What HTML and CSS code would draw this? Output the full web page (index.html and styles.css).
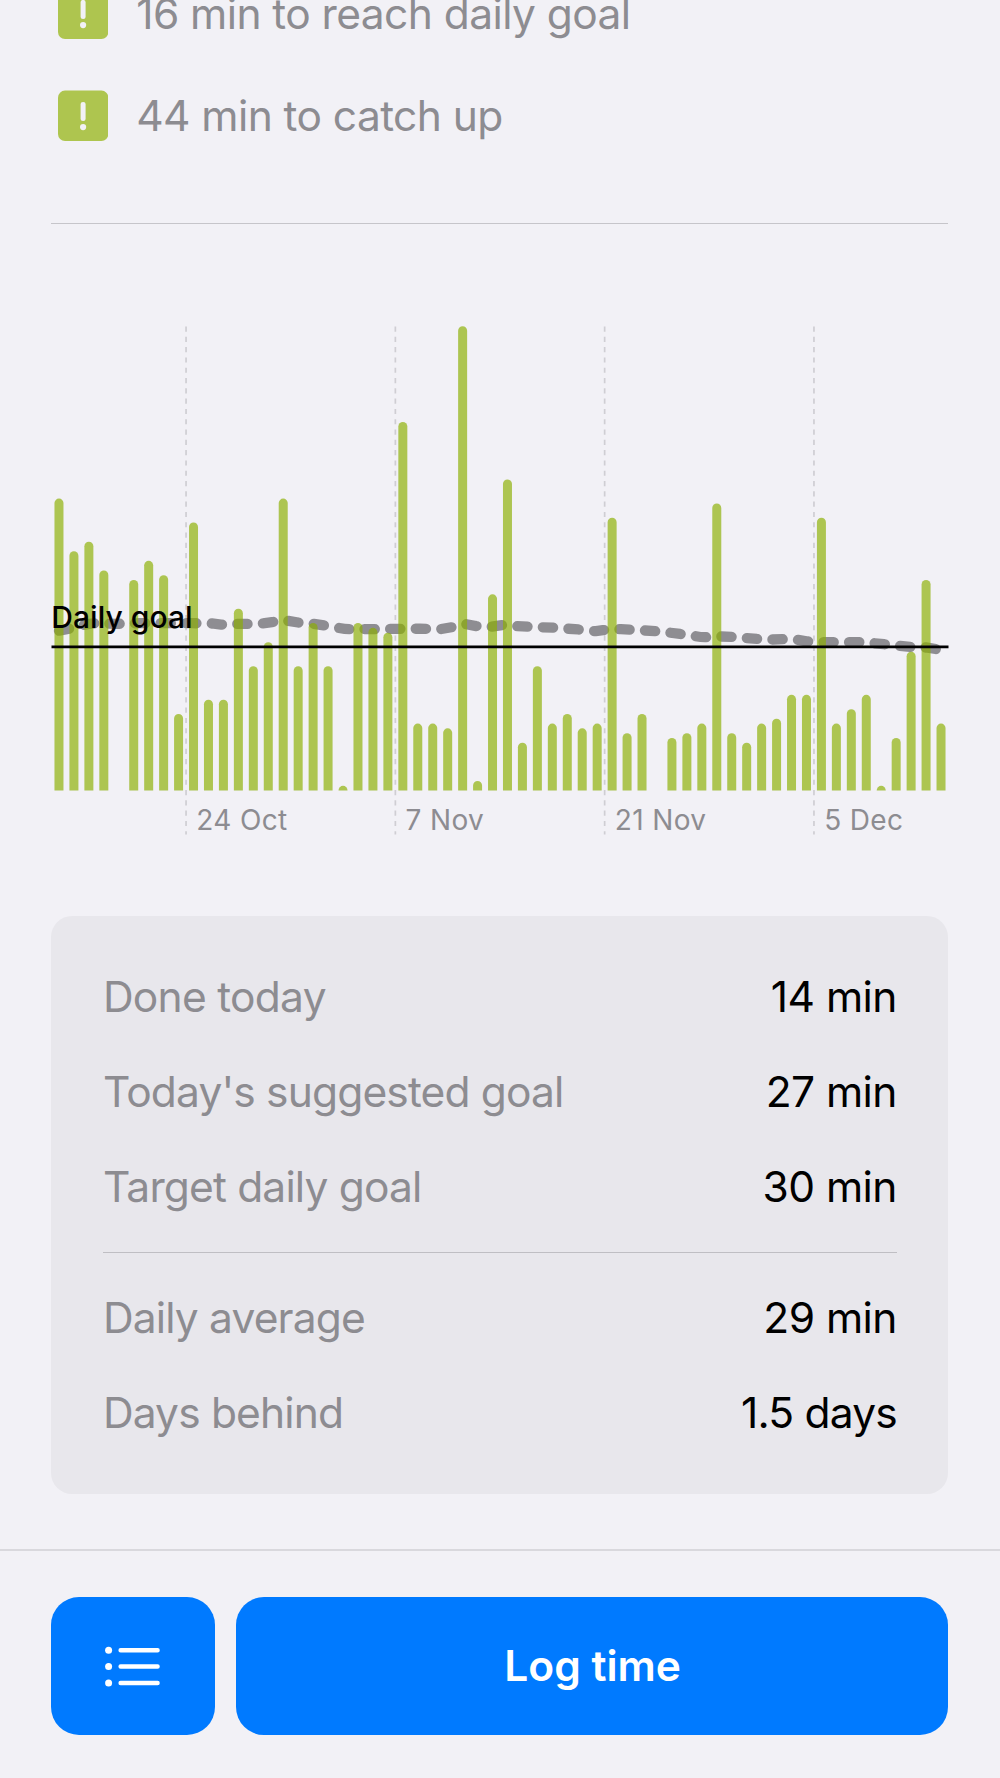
FILE: index.html
```html
<!DOCTYPE html>
<html lang="en">
<head>
<meta charset="utf-8">
<title>Daily goal</title>
<link rel="stylesheet" href="styles.css">
</head>
<body>
<main class="screen">
  <ul class="alerts">
    <li class="alert">
      <svg class="alert-icon" viewBox="0 0 50.4 51"><rect class="badge" y=".6" width="50.4" height="50.4" rx="7"/><path class="mark" d="M25.1 14.4v14.2"/><circle class="dot" cx="25.1" cy="37.1" r="3.1"/></svg>
      <span class="alert-text first">16 min to reach daily goal</span>
    </li>
    <li class="alert">
      <svg class="alert-icon" viewBox="0 0 50.4 51"><rect class="badge" y=".6" width="50.4" height="50.4" rx="7"/><path class="mark" d="M25.1 14.4v14.2"/><circle class="dot" cx="25.1" cy="37.1" r="3.1"/></svg>
      <span class="alert-text">44 min to catch up</span>
    </li>
  </ul>
  <hr class="rule">
  <svg class="chart" id="chart" viewBox="0 0 1000 520">
    <g id="grid"></g>
    <path class="average" d="M59 305.7 L69 303.7 L80 300.7 Q90 298.2 98 298.2 L115 298.9 L140 298.2 L192 298.2 L212 298.5 L221 299.7 L238 298.9 L250 298.9 L263 298.4 L272 297.2 Q283 295.5 288 295.9 L298 297.5 L313 298.7 L324 300.4 L338 302.8 Q345 304.2 350 304.2 L369 304.1 L420 303.7 L440 304.2 L452 302.2 Q461 299 466 299.2 L476 301 L491.5 301.7 L502 300.2 L517 301.2 L553 302.7 L578 304.4 Q588 306 596 306.2 L603 305.2 Q612 303.8 620.7 304.2 L645 305.5 L655 306.2 L670 307.7 L680 308.9 L695.7 311.2 Q703 312.7 709 312 L721 311.5 L732 311.9 L746.7 313.2 L757 313.9 L772 314.5 L787 314.1 L797.7 314.9 L808 316.5 L823 317.2 L859 317.2 L874 318.2 L884 319.2 L900 320.9 L910 321.9 L926 322.5 L941 324.8"/>
    <g id="bars"></g>
    <path class="goal" d="M51.5 321.9H948.5"/>
    <text class="goal-label" x="51.3" y="302.8">Daily goal</text>
  </svg>
  <section class="card">
    <div class="row"><span class="label">Done today</span><span class="value">14 min</span></div>
    <div class="row"><span class="label tight">Today's suggested goal</span><span class="value">27 min</span></div>
    <div class="row"><span class="label tight">Target daily goal</span><span class="value">30 min</span></div>
    <hr class="card-rule">
    <div class="row"><span class="label tight">Daily average</span><span class="value">29 min</span></div>
    <div class="row"><span class="label tight">Days behind</span><span class="value days">1.5 days</span></div>
  </section>
</main>
<footer class="toolbar">
  <button class="button list" aria-label="Entries">
    <svg class="list-icon" viewBox="0 0 56 42"><circle cx="3.6" cy="4.2" r="3.5"/><circle cx="3.6" cy="20.5" r="3.5"/><circle cx="3.6" cy="37" r="3.5"/><path d="M15.6 4.2h37M15.6 20.5h37M15.6 37h37"/></svg>
  </button>
  <button class="button log">Log time</button>
</footer>
<script src="chart.js"></script>
</body>
</html>
```
FILE: styles.css
```css
* { box-sizing: border-box; }

body {
  margin: 0;
  height: 1778px;
  display: flex;
  flex-direction: column;
  overflow: hidden;
  background: #f2f1f6;
  color: #000;
  font-family: Inter, "Liberation Sans", sans-serif;
  font-size: 42.5px;
  line-height: 51px;
}

.screen {
  height: 1549px;
  flex: none;
  display: flex;
  flex-direction: column;
  overflow: hidden;
}

.alerts {
  list-style: none;
  margin: -11.7px 0 0;
  padding: 0 58px;
  display: flex;
  flex-direction: column;
  gap: 50.7px;
  color: #8d8c91;
}

.alert { display: flex; align-items: center; gap: 27.8px; height: 51px; }
.alert-icon { width: 50.4px; height: 51px; flex: none; }
.badge { fill: #aec54f; }
.mark { stroke: #f2f1f6; stroke-width: 5; stroke-linecap: round; }
.dot { fill: #f2f1f6; }
.alert-text { letter-spacing: -0.58px; white-space: nowrap; }

.rule {
  width: 897px;
  height: 1px;
  margin: 82px 0 0 51.4px;
  border: 0;
  flex: none;
  background: #c6c5ca;
}

.chart { width: 1000px; height: 520px; margin-top: 101px; flex: none; }
.grid-line { stroke: #cfced3; stroke-width: 1.7; stroke-dasharray: 5.15; }
.axis-label { fill: #8d8c91; font-size: 28px; letter-spacing: 0.35px; }
.bar { fill: #8bae00; fill-opacity: 0.67; }
.average {
  fill: none;
  stroke: #8e8d92;
  stroke-width: 10.3;
  stroke-linecap: round;
  stroke-dasharray: 10.3 15.3;
}
.goal { stroke: #000; stroke-width: 2.8; }
.goal-label { font-size: 30px; font-weight: 500; letter-spacing: 0.05px; }

.card {
  flex: none;
  width: 897px;
  height: 577.5px;
  margin: 71px 0 0 51.4px;
  padding: 54.7px 51.5px 0;
  display: flex;
  flex-direction: column;
  gap: 44px;
  border-radius: 21px;
  background: #e8e7ec;
}

.row { display: flex; justify-content: space-between; height: 51px; }
.label { color: #8d8c91; letter-spacing: -0.72px; }
.label.tight { letter-spacing: -0.84px; }
.value { letter-spacing: -0.55px; }
.value.days { letter-spacing: -0.8px; }
.card-rule { width: 100%; height: 1px; margin: -4px 0 -5px; border: 0; background: #bfbec3; }

.toolbar {
  flex: 1;
  display: flex;
  gap: 20.6px;
  padding: 45.5px 51.6px 0 51.4px;
  border-top: 2px solid #d9d8dd;
}

.button {
  height: 138px;
  padding: 0;
  border: 0;
  border-radius: 28px;
  background: #007aff;
  color: #fff;
  font: 600 42.5px/51px Inter, "Liberation Sans", sans-serif;
}
.list { width: 163.8px; display: flex; padding: 49px 0 0 53.2px; }
.log { flex: 1; padding-left: 1px; }
.list-icon { width: 56px; height: 42px; fill: #fff; }
.list-icon path { stroke: #fff; stroke-width: 4.4; stroke-linecap: round; }
```
FILE: chart.js
```js
const minutes = [
  61, 50, 52, 46, 0, 44, 48, 45, 16, 56, 19, 19, 38, 26, 31, 61, 26, 35, 26, 1,
  35, 34, 33, 77, 14, 14, 13, 97, 2, 41, 65, 10, 26, 14, 16, 13, 14, 57, 12, 16,
  0, 11, 12, 14, 60, 12, 10, 14, 15, 20, 20, 57, 14, 17, 20, 1, 11, 29, 44, 14
];
const ticks = [[9, "24 Oct"], [23, "7 Nov"], [37, "21 Nov"], [51, "5 Dec"]];

const left = 51.5, step = 14.95, base = 465.6, unit = 4.787, half = 4.5;

document.getElementById("bars").innerHTML = minutes.map((m, day) => {
  if (!m) return "";
  const h = m * unit, r = Math.min(half, h);
  const x0 = left + step * (day + 0.5) - half, x1 = x0 + 2 * half;
  const top = base - h;
  return `<path class="bar" d="M${x0} ${base}V${top + r}A${r} ${r} 0 0 1 ${x0 + r} ${top}H${x1 - r}A${r} ${r} 0 0 1 ${x1} ${top + r}V${base}Z"/>`;
}).join("");

document.getElementById("grid").innerHTML = ticks.map(([day, name]) => {
  const x = left + step * day;
  return `<path class="grid-line" d="M${x} 1.5V509.5"/>` +
    `<text class="axis-label" x="${x + 10.2}" y="505">${name}</text>`;
}).join("");
```
